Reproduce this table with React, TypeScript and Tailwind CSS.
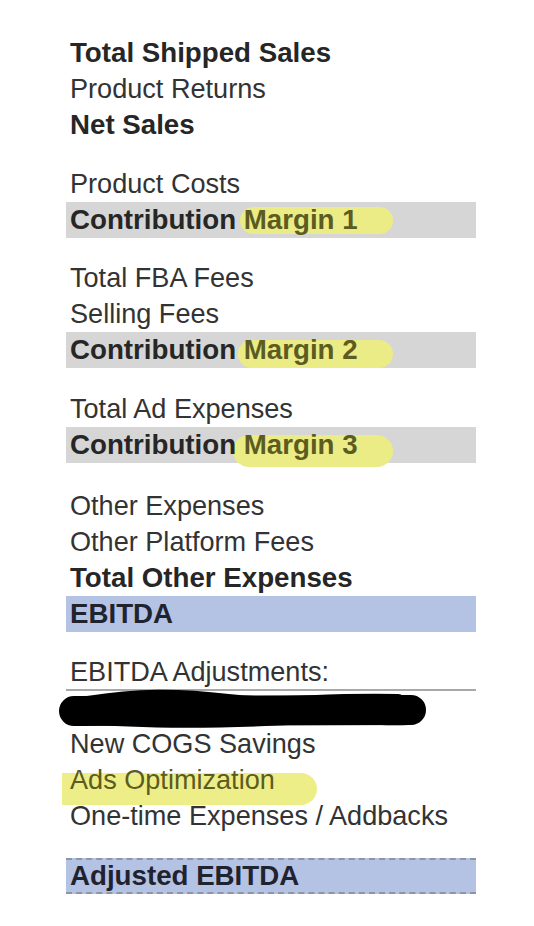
import React from "react";

const font = { fontFamily: '"Liberation Sans", Arial, sans-serif' };

function Row({ children, bold = false }: { children: React.ReactNode; bold?: boolean }) {
  return (
    <div className={`relative h-[36px] pl-[4px] leading-[36px] whitespace-nowrap ${bold ? "text-[27.7px] font-bold text-[#262626]" : "text-[27.1px] text-[#333333]"}`}>
      {children}
    </div>
  );
}

function MarginBand({ n, hl }: { n: string; hl: { left: number; top: number; width: number; height: number } }) {
  return (
    <div className="relative h-[36px] bg-[#d6d6d6] pl-[4px] text-[27.7px] leading-[36px] font-bold text-[#262626] whitespace-nowrap">
      <div
        className="absolute rounded-full bg-[#ecec86]"
        style={{ left: hl.left, top: hl.top, width: hl.width, height: hl.height }}
      />
      <span className="relative">Contribution</span>
      <span className="relative"> </span>
      <span className="relative text-[#5c5c22]">Margin {n}</span>
    </div>
  );
}

export default function App() {
  return (
    <div className="relative w-[534px] h-[926px] bg-white overflow-hidden" style={font}>
      <div className="ml-[66px] w-[410px] pt-[35px] flex flex-col">
        <Row bold>Total Shipped Sales</Row>
        <Row>Product Returns</Row>
        <Row bold>Net Sales</Row>
        <div className="h-[23px]" />
        <Row>Product Costs</Row>
        <MarginBand n="1" hl={{ left: 174, top: 5, width: 153, height: 27 }} />
        <div className="h-[22px]" />
        <Row>Total FBA Fees</Row>
        <Row>Selling Fees</Row>
        <MarginBand n="2" hl={{ left: 172, top: 8, width: 155, height: 28 }} />
        <div className="h-[23px]" />
        <Row>Total Ad Expenses</Row>
        <MarginBand n="3" hl={{ left: 167, top: 8, width: 160, height: 32 }} />
        <div className="h-[25px]" />
        <Row>Other Expenses</Row>
        <Row>Other Platform Fees</Row>
        <Row bold>Total Other Expenses</Row>
        <div className="h-[36px] bg-[#b4c2e3] pl-[4px] text-[27.7px] leading-[36px] font-bold text-[#1f2330]">EBITDA</div>
        <div className="h-[23px]" />
        <div className="h-[36px] pl-[4px] text-[27.1px] leading-[34px] text-[#333333] border-b-2 border-[#a8a8a8]">
          EBITDA Adjustments:
        </div>
        <div className="relative h-[35px]">
          <svg className="absolute left-[-8px] top-0 overflow-visible" width="380" height="36" viewBox="0 0 380 36">
            <path d="M16 20 L 353 19" stroke="#000" strokeWidth="30" strokeLinecap="round" fill="none" />
            <path d="M30 12 C 80 4, 120 4, 170 10 S 260 8, 340 10" stroke="#000" strokeWidth="14" strokeLinecap="round" fill="none" />
            <path d="M20 28 C 80 34, 150 34, 230 30 S 320 32, 350 30" stroke="#000" strokeWidth="8" strokeLinecap="round" fill="none" />
          </svg>
        </div>
        <Row>New COGS Savings</Row>
        <div className="relative h-[36px] pl-[4px] text-[27.1px] leading-[36px] whitespace-nowrap">
          <div className="absolute left-[-4px] top-[11px] w-[255px] h-[32px] rounded-r-full rounded-l-[10px] bg-[#eeee88]" />
          <span className="relative text-[#5c5c22]">Ads Optimization</span>
        </div>
        <Row>One-time Expenses / Addbacks</Row>
        <div className="h-[24px]" />
        <div className="h-[36px] bg-[#b4c2e3] pl-[4px] text-[27.7px] leading-[32px] font-bold text-[#1f2330] border-y-2 border-dashed border-[#8e95a8]">
          Adjusted EBITDA
        </div>
      </div>
    </div>
  );
}
